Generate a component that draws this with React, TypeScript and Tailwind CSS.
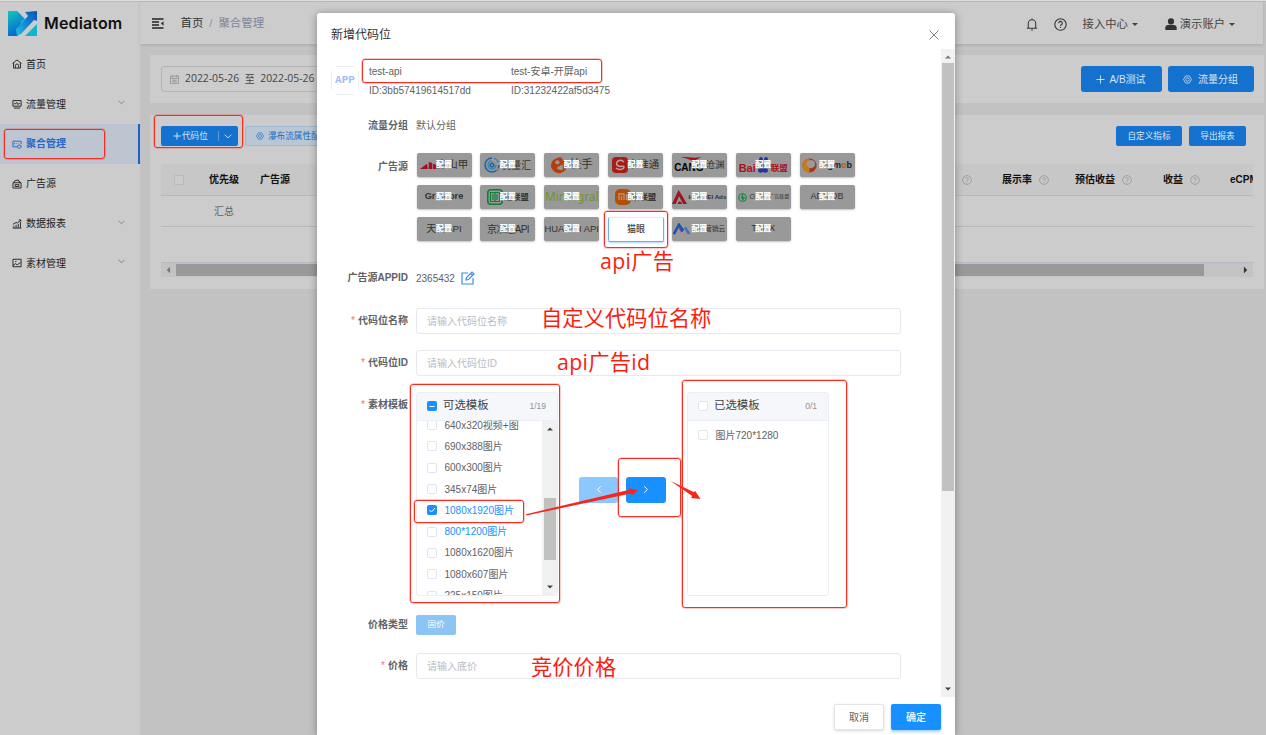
import React from 'react';

type P = { children?: React.ReactNode; className?: string };

const Question = ({ className = '' }: P) => (
  <svg viewBox="0 0 24 24" className={className} fill="none" stroke="currentColor" strokeWidth="2">
    <circle cx="12" cy="12" r="10.5" />
    <path d="M8.7 9.5a3.3 3.3 0 1 1 4.8 3c-1 .6-1.5 1-1.5 2.1" />
    <path d="M12 16.4v2" />
  </svg>
);

const Gear = ({ className = '' }: P) => (
  <svg viewBox="0 0 24 24" className={className} fill="none" stroke="currentColor" strokeWidth="2">
    <path d="M7 2.500h10L22.500 12 17 21.500H7L1.500 12z" />
    <circle cx="12" cy="12" r="4.500" />
  </svg>
);

const Chevron = ({ className = '' }: P) => (
  <svg viewBox="0 0 10 6" className={className} fill="none" stroke="currentColor" strokeWidth="1.200">
    <path d="M1 .8 5 4.800 9 .8" />
  </svg>
);

const Tri = ({ className = '' }: P) => (
  <svg viewBox="0 0 8 4" className={className} fill="currentColor">
    <path d="M0 0h8L4 4z" />
  </svg>
);

const menuIcons = {
  home: <path d="M1 7 8 1.500 15 7M2.500 6v8.500h11V6M5.500 14v-3.500a2.500 2.500 0 0 1 5 0V14" />,
  flow: <path d="M1.500 2.500h13v9h-13zM3 14.500h10M3.500 7.500H6l1.500-2 2 3.500 1.500-2h1.500" />,
  merge: <path d="M8 12.500H1.500v-9h13V8M4 6.500v2M7 6.500v1M10 6.500v1M11.500 9.500l3 1v3l-3 1.500-2.500-1.500v-3z" />,
  source: <path d="M1.500 6h13v8.500h-13zM3 6l1-3 6-1.500L11 4l2 .5V6M5 9h6v3H5z" />,
  chart: <path d="M1 14.500h14M3 14v-3M6.500 14V9.500M10 14V8M13.500 14V5M1.500 8.500l5-3 2 1L14 2M11 1.500h3v2.500" />,
  image: <path d="M1.500 2h13v12h-13zM1.500 12l4-3 3 2 5.500-4M5 5.500h2" />,
};

const menu: { label: string; icon: keyof typeof menuIcons; arrow?: boolean; active?: boolean }[] = [
  { label: '首页', icon: 'home' },
  { label: '流量管理', icon: 'flow', arrow: true },
  { label: '聚合管理', icon: 'merge', active: true },
  { label: '广告源', icon: 'source' },
  { label: '数据报表', icon: 'chart', arrow: true },
  { label: '素材管理', icon: 'image', arrow: true },
];

const Sidebar = () => (
  <aside className="flex w-[139.500px] shrink-0 flex-col bg-[#cccccc]">
    <div className="flex h-[42.500px] items-center pl-[8px]">
      <svg viewBox="0 0 29 25" className="h-[25px] w-[29px]">
        <defs>
          <linearGradient id="lg1" x1="0" y1="0" x2="0.300" y2="1">
            <stop offset="0" stopColor="#12c9bd" />
            <stop offset="1" stopColor="#0a67d0" />
          </linearGradient>
          <linearGradient id="lg2" x1="0" y1="1" x2="1" y2="0">
            <stop offset="0" stopColor="#25c2e0" />
            <stop offset="0.500" stopColor="#0f86d6" />
            <stop offset="1" stopColor="#0a4fb5" />
          </linearGradient>
        </defs>
        <path d="M0 0h9l5 8-4 17H0z" fill="url(#lg1)" />
        <path d="M9 25 8 18 20 5l-3-4 12-1v10l-3-1-13 14z" fill="url(#lg2)" />
        <path d="M29 13v12H17z" fill="#0cb5d0" />
        <path d="M9 0l8 8-4 4z" fill="#0799c8" />
      </svg>
      <span className="ml-[7px] font-['Inter'] text-[16px] font-semibold tracking-[0.150px] text-[#111]">Mediatom</span>
    </div>
    {menu.map((m) => (
      <div
        key={m.label}
        className={
          m.active
            ? 'flex h-[39.800px] items-center border-r-2 border-[#1a62cb] bg-[#bcc5d0] pl-3 font-bold text-[#2467cc]'
            : 'flex h-[39.800px] items-center border-r-2 border-transparent pl-3 text-[#222]'
        }
      >
        <svg viewBox="0 0 16 16" className="h-[10px] w-[10px]" fill="none" stroke="currentColor" strokeWidth="1.500">
          {menuIcons[m.icon]}
        </svg>
        <span className="ml-[4px] flex-1 text-[10px]">{m.label}</span>
        {m.arrow && <Chevron className="mr-[13px] mb-[3px] h-[5px] w-[7px] text-[#777]" />}
      </div>
    ))}
  </aside>
);

const Header = () => (
  <header className="mr-[3px] flex h-[42px] shrink-0 items-center bg-[#cccccc] pl-[12px] text-[#444] shadow-[0_1px_3px_rgba(0,0,0,0.120)]">
    <svg viewBox="0 0 12 11" className="h-[11px] w-[12px]" fill="none" stroke="#222" strokeWidth="1.400">
      <path d="M0 1h11.500M0 4h7M0 7h7M0 10h11.500" />
      <path d="M11.500 3.300v4.400L9 5.500z" fill="#222" stroke="none" />
    </svg>
    <div className="ml-[17px] flex items-center pt-[2px] text-[11.400px]">
      <span className="text-[#333]">首页</span>
      <span className="mx-[6px] text-[#8a93a2]">/</span>
      <span className="text-[#7d8798]">聚合管理</span>
    </div>
    <div className="ml-auto flex items-center pt-[2px] text-[11.300px]">
      <svg viewBox="0 0 12 14" className="h-[13px] w-[12px]" fill="none" stroke="#333" strokeWidth="1.100">
        <path d="M.5 11h11M2 11V6a4 4 0 0 1 8 0v5M6 2V.5M5 12.800h2" />
      </svg>
      <Question className="ml-[16px] h-[13px] w-[13px] text-[#333]" />
      <span className="ml-[16px]">接入中心</span>
      <Tri className="ml-[4px] h-[3px] w-[6px]" />
      <svg viewBox="0 0 12 12" className="ml-[27px] h-[12px] w-[12px] fill-[#333]">
        <circle cx="6" cy="3.400" r="3.100" />
        <path d="M.3 12V9.500C.5 7.500 2 7 4 7h4c2 0 3.500.5 3.700 2.500V12z" />
      </svg>
      <span className="ml-[3px]">演示账户</span>
      <Tri className="mr-[28px] ml-[4px] h-[3px] w-[6px]" />
    </div>
  </header>
);

const Th = ({ label, className = '' }: { label: string; className?: string }) => (
  <div className={`flex shrink-0 items-center ${className}`}>
    <span>{label}</span>
    <Question className="ml-[7px] h-[10px] w-[10px] text-[#999]" />
  </div>
);

const Main = () => (
  <main className="flex min-w-0 flex-1 flex-col bg-[#c2c2c2]">
    <Header />
    <section className="mt-[11px] mr-[2px] ml-[10.500px] flex h-[48px] shrink-0 items-center bg-[#cccccc] pr-[10.500px] pl-[11px]">
      <div className="flex h-[26px] w-[210px] items-center rounded-[3px] border border-[#b4b4b4] pl-[8px] font-['Open_Sans','Noto_Sans_CJK_SC',sans-serif] text-[10.400px] whitespace-nowrap text-[#444]">
        <svg viewBox="0 0 12 12" className="mr-[6px] h-[9px] w-[9px]" fill="none" stroke="#888">
          <path d="M.5 1.500h11v10H.5zM.5 4.500h11M3.500 0v2.500M8.500 0v2.500M3 7h6M3 9h6" />
        </svg>
        2022-05-26<span className="mx-[5.500px] text-[10px]">至</span>2022-05-26
      </div>
      <button className="ml-auto flex h-[26px] w-[81px] items-center justify-center rounded-[3px] bg-[#1472ce] text-[10px] text-[#d8e4f0]">
        <svg viewBox="0 0 10 10" className="mr-[4px] h-[9px] w-[9px]" stroke="currentColor"><path d="M5 .5v9M.5 5h9" /></svg>
        A/B测试
      </button>
      <button className="ml-[6px] flex h-[26px] w-[86px] items-center justify-center rounded-[3px] bg-[#1472ce] text-[10px] text-[#d8e4f0]">
        <Gear className="mr-[6px] h-[9px] w-[9px]" />
        流量分组
      </button>
    </section>
    <section className="mt-[12px] mr-[2px] ml-[10.500px] h-[174px] shrink-0 bg-[#cccccc] pt-[11px] pr-[11px] pl-[11px]">
      <div className="flex items-center text-[8.600px]">
        <button className="flex h-[20px] w-[77px] items-center rounded-[2px] bg-[#1472ce] pl-[12px] text-[#d8e4f0]">
          <svg viewBox="0 0 10 10" className="mr-px h-[8px] w-[8px]" stroke="currentColor" strokeWidth="1.200"><path d="M5 .5v9M.5 5h9" /></svg>
          代码位
          <span className="ml-[10px] h-[10px] w-px bg-[#5b9bd8]" />
          <Chevron className="ml-[5px] h-[5px] w-[8px]" />
        </button>
        <button className="ml-[7px] flex h-[20px] w-[110px] items-center rounded-[2px] border border-[#a0bad4] bg-[#b9c7d5] pl-[10px] whitespace-nowrap text-[#1c70c6]">
          <Gear className="mr-[4px] h-[8px] w-[8px]" />
          瀑布流属性配置
        </button>
        <button className="ml-auto h-[20px] w-[66px] rounded-[2px] bg-[#1472ce] text-[#d8e4f0]">自定义指标</button>
        <button className="mr-[7px] ml-[7px] h-[20px] w-[57px] rounded-[2px] bg-[#1472ce] text-[#d8e4f0]">导出报表</button>
      </div>
      <div className="mt-[18px] overflow-hidden">
        <div className="flex h-[32px] items-center border-b border-[#b8b8b8] bg-[#c7c7c7] text-[10px] font-bold whitespace-nowrap text-[#111]">
          <span className="ml-[13px] h-[10px] w-[10px] shrink-0 rounded-[1px] border border-[#b9b9b9] bg-[#cccccc]" />
          <span className="ml-[25px] shrink-0">优先级</span>
          <span className="ml-[21px] w-[666px] shrink-0">广告源</span>
          <Th label="" className="w-[76px] pl-[29px]" />
          <Th label="展示率" className="w-[73px]" />
          <Th label="预估收益" className="w-[88px]" />
          <Th label="收益" className="w-[67px]" />
          <span className="shrink-0">eCPM</span>
        </div>
        <div className="flex h-[31px] items-center border-b border-[#b8b8b8] pl-[53px] text-[10px] text-[#606266]">汇总</div>
        <div className="h-[35px]" />
        <div className="flex h-[15px] items-center border-t border-[#b5bac2] bg-[#c3c3c3]">
          <Tri className="ml-[4px] h-[4px] w-[7px] rotate-90 text-[#777]" />
          <span className="ml-[4px] h-[12px] w-[1028px] bg-[#999]" />
          <Tri className="ml-auto mr-[4px] h-[4px] w-[7px] -rotate-90 text-[#333]" />
        </div>
      </div>
    </section>
  </main>
);

const brands: React.ReactNode[] = [
  <>
    <svg viewBox="0 0 24 8" className="h-[7px] w-[21px] shrink-0" fill="#a30d22"><path d="M0 8 8 2l1 6zM10 8V0l4 1v7zM15 8V2l4 1 5 5z" /></svg>
    <span className="-ml-[4px] text-[10.500px]">穿山甲</span>
  </>,
  <>
    <svg viewBox="0 0 16 16" className="h-[16px] w-[16px] shrink-0" fill="none" strokeWidth="1.600"><path d="M8 1a7 7 0 1 0 7 7" stroke="#2362ad" /><path d="M8 4a4 4 0 1 0 4 4M10 1.300a7 7 0 0 1 4.500 4" stroke="#328bbd" /><circle cx="8" cy="8" r="1.800" stroke="#2362ad" /><path d="M12 13l2-2" stroke="#d28c25" /></svg>
    <span className="ml-px text-[10px]">优量汇</span>
  </>,
  <>
    <svg viewBox="0 0 16 16" className="h-[17px] w-[17px] shrink-0"><path d="M6 1c3-2 6 1 5 3 4-1 6 3 4 6-1 3-4 4-6 5-4 1-8-2-9-6C0 5 2 2 6 1z" fill="#b43c0d" /><circle cx="6" cy="5" r="2" fill="#999" /><path d="M6 9.500l5-2.500v5.500l-5-1z" fill="#999" /></svg>
    <span className="ml-[2px] text-[11.500px]">快手</span>
  </>,
  <>
    <svg viewBox="0 0 16 16" className="h-[16px] w-[16px] shrink-0"><rect width="16" height="16" rx="4" fill="#a51d17" /><path d="M12 5C8 1 3 5 5 8s7 0 7 2-5 4-8 1" fill="none" stroke="#c1a29b" strokeWidth="1.500" /></svg>
    <span className="text-[10.500px]">京准通</span>
  </>,
  <>
    <svg viewBox="0 0 28 8" className="absolute top-[4px] left-[6px] h-[6px] w-[26px]"><path d="M0 0c12 0 18 2 28 0C20 3 16 8 16 8 15 3 8 2 0 0z" fill="#a8101b" /></svg>
    <span className="mt-[5px] text-[10px] font-black text-black">CANG</span>
    <span className="ml-[2px] text-[9.500px]">沧渊</span>
  </>,
  <>
    <span className="mt-[7px] text-[11px] font-bold text-[#a8131b]">Bai</span>
    <svg viewBox="0 0 14 16" className="h-[16px] w-[14px] shrink-0" fill="#2534a0"><ellipse cx="5" cy="3" rx="2" ry="3" /><ellipse cx="10" cy="3" rx="2" ry="3" /><ellipse cx="1.800" cy="7" rx="1.800" ry="2.500" /><ellipse cx="12.500" cy="7" rx="1.500" ry="2.500" /><path d="M7 7c2 0 2 3 4 4 3 4-1 6-4 4-3 2-7 0-4-4 2-1 2-4 4-4z" /></svg>
    <span className="mt-[6px] ml-px text-[8.500px] font-bold text-[#a8131b]">联盟</span>
  </>,
  <>
    <svg viewBox="0 0 16 16" className="h-[15px] w-[15px] shrink-0"><circle cx="8" cy="8" r="7.500" fill="#aa351e" /><path d="M8 .5a7.500 7.500 0 0 0 0 15" fill="#c57a1c" /><circle cx="9.500" cy="6.500" r="4.500" fill="#999" /></svg>
    <span className="mt-[2px] ml-[2px] text-[9px] font-black text-[#222]">Sigm<i className="text-[#b55b16] not-italic">o</i>b</span>
  </>,
  <span className="text-[9.300px] font-bold">GroMore</span>,
  <>
    <svg viewBox="0 0 16 16" className="h-[16px] w-[16px] shrink-0"><rect x=".8" y=".8" width="14.400" height="14.400" rx="3" fill="#999" stroke="#137b39" strokeWidth="1.600" /><path d="M3.500 3.500h9v9h-9zM6 5v6M8 4v8M10 5v6" stroke="#137b39" fill="none" strokeWidth="1.200" /></svg>
    <span className="ml-px text-[8.300px] font-bold">趣联盟</span>
  </>,
  <span className="font-['Noto_Sans'] text-[11.800px] text-[#6f942d]">Mintegral</span>,
  <>
    <svg viewBox="0 0 16 16" className="h-[16px] w-[16px] shrink-0"><rect width="16" height="16" rx="5" fill="#b64d06" /><path d="M4 11V5h5v6M6.500 7v4M11.500 5v6" stroke="#b8957e" strokeWidth="1.300" fill="none" /></svg>
    <span className="text-[8.500px] font-bold">米联盟</span>
  </>,
  <>
    <svg viewBox="0 0 16 15" className="h-[14px] w-[15px] shrink-0" fill="#9c1526"><path d="M0 15 7 0l2 3-5 12zM9 3l7 12h-4L7 6z" /><path d="M6 15c1-4 3-4 5 0z" /></svg>
    <span className="ml-px text-[6.200px] font-bold">HUAWEI Ads</span>
  </>,
  <>
    <svg viewBox="0 0 12 12" className="h-[9px] w-[9px] shrink-0" fill="none" stroke="#12863d" strokeWidth="1.500"><circle cx="6" cy="6" r="5" /><path d="M6 2v5L4 5M6 9l2-2V5" /></svg>
    <span className="ml-[3px] text-[7px]">OPPO</span><span className="text-[4.800px]">广告联盟</span>
  </>,
  <span className="text-[9px]">ADMOB</span>,
  <span className="text-[9.800px]">天目API</span>,
  <span className="text-[10px] tracking-[-0.700px]">京准通API</span>,
  <span className="text-[9.400px]">HUAWEI API</span>,
  null,
  <>
    <svg viewBox="0 0 20 14" className="h-[12px] w-[17px] shrink-0" fill="none" strokeWidth="3"><path d="M1 13 7 2l5 7" stroke="#1455ae" /><path d="M8 5l3 5" stroke="#5b3aa1" /><path d="M14 5l5 8" stroke="#3e75bd" /></svg>
    <span className="ml-px text-[6.800px]">阿里营销云</span>
  </>,
  <span className="text-[9.200px]">TANX</span>,
];

const BrandGrid = () => (
  <div className="flex w-[456px] flex-wrap content-start gap-x-[8.850px] gap-y-[8px] pl-[0.500px]">
    {brands.map((b, i) =>
      b ? (
        <div key={i} className="relative flex h-[24px] w-[55px] items-center justify-center overflow-hidden rounded-[2px] bg-[#999] whitespace-nowrap text-[#333] shadow-[0_1px_2px_rgba(0,0,0,0.250)]">
          {b}
          <span className="absolute inset-0 flex items-center justify-center text-[8px] font-black text-white">
            <span className="bg-[#b0b0b0]/40 leading-[8px]">配置</span>
          </span>
        </div>
      ) : (
        <div key={i} className="flex h-[25px] w-[56px] items-center justify-center rounded-[2px] border border-[#70acf3] border-t-[#e4eaf2] bg-white text-[9px] font-medium text-[#444] shadow-[0_1px_2px_rgba(64,140,240,0.400)] -mr-px -mb-px">
          猫眼
        </div>
      ),
    )}
  </div>
);

const Row = ({ label, req, children, className = '', labelClass = '' }: P & { label: string; req?: boolean; labelClass?: string }) => (
  <div className={`flex shrink-0 ${className}`}>
    <div className={`mr-[8px] w-[77px] shrink-0 text-right text-[10px] font-bold whitespace-nowrap text-[#606266] ${labelClass}`}>
      {req && <span className="mr-[3px] font-normal text-[#f56c6c]">*</span>}
      {label}
    </div>
    {children}
  </div>
);

const Field = ({ placeholder }: { placeholder: string }) => (
  <input
    placeholder={placeholder}
    className="h-[26px] w-[485px] rounded-[3px] border border-[#e6e9f0] bg-white px-[10px] pt-px text-[10px] outline-none placeholder:text-[#b8bcc5]"
  />
);

const Box = ({ state }: { state?: 'on' | 'some' }) =>
  state ? (
    <span className="flex h-[10px] w-[10px] shrink-0 items-center justify-center rounded-[2px] bg-[#1890ff]">
      <svg viewBox="0 0 10 10" className="h-[10px] w-[10px]" fill="none" stroke="#fff">
        {state === 'on' ? <path d="M2.500 5l2 2 3.500-4" /> : <path d="M2.500 5.500h5" />}
      </svg>
    </span>
  ) : (
    <span className="h-[10px] w-[10px] shrink-0 rounded-[2px] border border-[#e2e5eb] bg-white" />
  );

const PanelHead = ({ title, count, some }: { title: string; count: string; some?: boolean }) => (
  <div className="flex h-[28px] shrink-0 items-center border-b border-[#ebeef5] bg-[#f5f7fa] pr-[11px] pl-[10px]">
    <Box state={some ? 'some' : undefined} />
    <span className="ml-[6px] text-[11.400px] text-[#404245]">{title}</span>
    <span className="ml-auto text-[8.500px] text-[#909399]">{count}</span>
  </div>
);

const templates = [
  '640x320视频+图', '690x388图片', '600x300图片', '345x74图片', '1080x1920图片',
  '800*1200图片', '1080x1620图片', '1080x607图片', '225x150图片',
];

const Transfer = () => (
  <div className="flex h-[204.500px]">
    <div className="flex w-[142px] flex-col overflow-hidden rounded-[3px] border border-[#ebeef5]">
      <PanelHead title="可选模板" count="1/19" some />
      <div className="flex min-h-0 flex-1">
        <div className="-mt-[6px] flex-1 overflow-hidden pl-[10px] [clip-path:inset(6px_0_0_0)]">
          {templates.map((t, i) => (
            <div key={t} className={i === 4 || i === 5 ? 'flex h-[21.300px] items-center text-[10px] text-[#1890ff]' : 'flex h-[21.300px] items-center text-[10px] text-[#606266]'}>
              <Box state={i === 4 ? 'on' : undefined} />
              <span className="ml-[7.500px] whitespace-nowrap">{t}</span>
            </div>
          ))}
        </div>
        <div className="flex w-[15px] flex-col items-center bg-[#f1f1f1]">
          <Tri className="mt-[6px] h-[4px] w-[6px] rotate-180 text-[#444]" />
          <span className="mt-[67px] h-[62px] w-[12px] bg-[#c1c1c1]" />
          <Tri className="mt-auto mb-[6px] h-[4px] w-[6px] text-[#444]" />
        </div>
      </div>
    </div>
    <button className="mt-[85px] ml-[21px] flex h-[26px] w-[39px] items-center justify-center rounded-[3px] bg-[#8cc8ff] text-white">
      <Chevron className="h-[5px] w-[8px] rotate-90" />
    </button>
    <button className="mt-[85px] ml-[8px] flex h-[26px] w-[40px] items-center justify-center rounded-[3px] bg-[#1890ff] text-white">
      <Chevron className="h-[5px] w-[8px] -rotate-90" />
    </button>
    <div className="ml-[21px] flex w-[142px] flex-col overflow-hidden rounded-[3px] border border-[#ebeef5]">
      <PanelHead title="已选模板" count="0/1" />
      <div className="mt-[4px] flex h-[21px] items-center pl-[10px] text-[10px] text-[#606266]">
        <Box />
        <span className="ml-[7.500px]">图片720*1280</span>
      </div>
    </div>
  </div>
);

const Modal = () => (
  <div className="absolute top-[13px] left-[317px] flex h-[722px] w-[638px] flex-col rounded-t-[3px] bg-white shadow-[0_1px_8px_rgba(0,0,0,0.350)]">
    <div className="flex h-[36px] shrink-0 items-center justify-between pt-[7px] pr-[16px] pl-[14px] text-[12px] text-[#303133]">
      新增代码位
      <svg viewBox="0 0 10 10" className="h-[10px] w-[10px]" stroke="#808388"><path d="M.5.500l9 9M9.500.500l-9 9" /></svg>
    </div>
    <div className="flex min-h-0 flex-1">
      <div className="flex flex-1 flex-col overflow-hidden pl-[14px]">
        <div className="flex h-[62px] shrink-0 items-start pt-[13px] text-[10px] text-[#606266]">
          <div className="relative mt-[4px] flex h-[29px] w-[28px] items-center justify-center border border-[#eceef1] font-['Liberation_Mono',monospace] text-[11px] font-bold text-[#a3bdfa]">
            <span className="absolute -top-px -left-px h-[5px] w-[5px] bg-white" />
            <span className="absolute -top-px -right-px h-[5px] w-[5px] bg-white" />
            <span className="absolute -bottom-px -left-px h-[5px] w-[5px] bg-white" />
            <span className="absolute -right-px -bottom-px h-[5px] w-[5px] bg-white" />
            APP
          </div>
          <div className="ml-[10px] w-[142px] leading-[19px]">
            <div>test-api</div>
            <div>ID:3bb57419614517dd</div>
          </div>
          <div className="leading-[19px] whitespace-nowrap">
            <div>test-安卓-开屏api</div>
            <div>ID:31232422af5d3475</div>
          </div>
        </div>
        <Row label="流量分组" className="h-[28px] items-center">
          <span className="text-[10px] text-[#606266]">默认分组</span>
        </Row>
        <Row label="广告源" className="mt-[14px] h-[88px]" labelClass="pt-[5.500px]"><BrandGrid /></Row>
        <Row label="广告源APPID" className="mt-[24px] h-[26px] items-center" labelClass="pb-[2px]">
          <span className="pt-px text-[10px] text-[#606266]">2365432</span>
          <svg viewBox="0 0 14 14" className="ml-[6px] h-[14px] w-[14px]" fill="none" stroke="#3b8ee8" strokeWidth="1.200">
            <path d="M7 2H1v11h11V7M5 9l.5-2.500L11 1l2 2-5.500 5.500zM9.500 2.500l2 2" />
          </svg>
        </Row>
        <Row label="代码位名称" req className="mt-[16.500px] items-center"><Field placeholder="请输入代码位名称" /></Row>
        <Row label="代码位ID" req className="mt-[16px] items-center"><Field placeholder="请输入代码位ID" /></Row>
        <Row label="素材模板" req className="mt-[16px]" labelClass="pt-[5px]"><Transfer /></Row>
        <Row label="价格类型" className="mt-[18.500px] items-center">
          <button className="h-[20px] w-[40px] rounded-[2px] bg-[#8cc5f4] text-[8.500px] text-white">固价</button>
        </Row>
        <Row label="价格" req className="mt-[18px] items-center"><Field placeholder="请输入底价" /></Row>
      </div>
      <div className="flex w-[14px] flex-col items-center bg-[#f1f1f1]">
        <Tri className="mt-[6px] h-[4px] w-[6px] rotate-180 text-[#777]" />
        <span className="mt-[4px] h-[428px] w-[12px] bg-[#c1c1c1]" />
        <Tri className="mt-auto mb-[6px] h-[4px] w-[6px] text-[#444]" />
      </div>
    </div>
    <div className="flex h-[38px] shrink-0 justify-end pt-[7px] pr-[14px] text-[10px]">
      <button className="h-[26px] w-[50px] rounded-[2px] border border-[#e2e4e8] bg-white text-[#606266] shadow-[0_1px_3px_rgba(0,0,0,0.150)]">取消</button>
      <button className="ml-[7px] h-[26px] w-[50px] rounded-[2px] bg-[#1890ff] font-medium text-white shadow-[0_2px_3px_rgba(24,144,255,0.400)]">确定</button>
    </div>
  </div>
);

const Frame = ({ className = '' }: P) => (
  <div className={`pointer-events-none absolute rounded-[3px] border border-[#fb2c1e] shadow-[0_0_0_0.500px_rgba(251,44,30,0.500)] ${className}`} />
);

const Note = ({ children, className = '' }: P) => (
  <div className={`pointer-events-none absolute font-['Open_Sans','Noto_Sans_CJK_SC',sans-serif] text-[21.300px] leading-[26px] whitespace-nowrap text-[#fb1d10] ${className}`}>
    {children}
  </div>
);

export default function App() {
  return (
    <div className="relative flex h-[735px] w-[1266px] flex-col overflow-hidden border-t border-[#dedede] bg-[#cccccc] font-['Liberation_Sans','Noto_Sans_CJK_SC',sans-serif]">
      <div className="flex min-h-0 flex-1 border-t border-[#bababa]">
        <Sidebar />
        <Main />
      </div>
      <div className="absolute -top-px left-0 h-[735px] w-[1266px]">
        <Modal />
        <Frame className="top-[129px] left-[4px] h-[30px] w-[101px]" />
        <Frame className="top-[115px] left-[154px] h-[33px] w-[89px]" />
        <Frame className="top-[59px] left-[362px] h-[24px] w-[240px]" />
        <Frame className="top-[211px] left-[604px] h-[37px] w-[64px]" />
        <Frame className="top-[384px] left-[410px] h-[219px] w-[150px]" />
        <Frame className="top-[500px] left-[414px] h-[23px] w-[110px]" />
        <Frame className="top-[458px] left-[618px] h-[59px] w-[63px]" />
        <Frame className="top-[380px] left-[682px] h-[228px] w-[165px]" />
        <svg viewBox="0 0 1266 735" className="pointer-events-none absolute inset-0 h-[735px] w-[1266px] fill-[#f5271b]">
          <path d="M526 514.200 629.500 489.700 629 488 638 490.500 631.500 495.500 631 493.500 526.300 515.400z" />
          <path d="M670.300 480.800 694 492.300 695 490.800 700.500 499 691 498 692.200 496z" />
        </svg>
        <Note className="top-[248px] left-[600px] tracking-[0.300px]">api广告</Note>
        <Note className="top-[305px] left-[541px]">自定义代码位名称</Note>
        <Note className="top-[349px] left-[557px] tracking-[0.300px]">api广告id</Note>
        <Note className="top-[654px] left-[531px]">竞价价格</Note>
      </div>
    </div>
  );
}
